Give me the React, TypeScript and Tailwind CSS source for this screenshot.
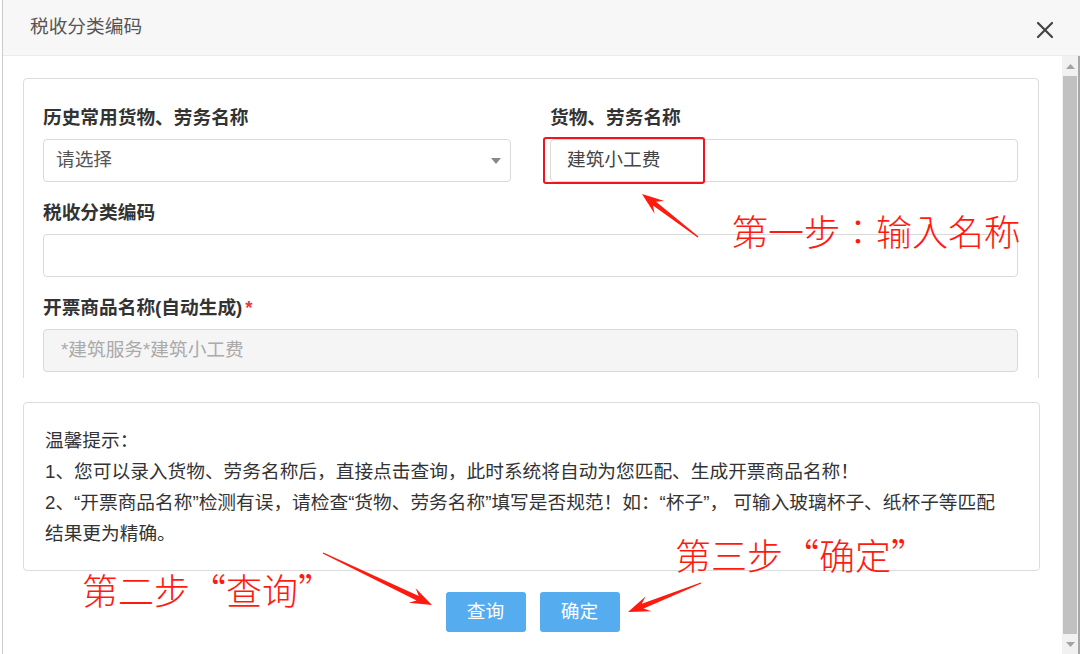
import React from "react";

const UI_FONT = "font-['Liberation_Sans','Noto_Sans_CJK_SC',sans-serif]";

type Pt = [number, number];

// tapered annotation arrow, thin at the tail and notched at the head
function arrowPoints(tail: Pt, tip: Pt, headLen = 22, headW = 16, shaftW = 5) {
  const dx = tip[0] - tail[0];
  const dy = tip[1] - tail[1];
  const len = Math.hypot(dx, dy);
  const ux = dx / len;
  const uy = dy / len;
  const nx = -uy;
  const ny = ux;
  const bx = tip[0] - ux * headLen * 0.72;
  const by = tip[1] - uy * headLen * 0.72;
  const hx = tip[0] - ux * headLen;
  const hy = tip[1] - uy * headLen;
  const pts: Pt[] = [
    [tail[0] + nx * 0.6, tail[1] + ny * 0.6],
    [bx + (nx * shaftW) / 2, by + (ny * shaftW) / 2],
    [hx + (nx * headW) / 2, hy + (ny * headW) / 2],
    tip,
    [hx - (nx * headW) / 2, hy - (ny * headW) / 2],
    [bx - (nx * shaftW) / 2, by - (ny * shaftW) / 2],
    [tail[0] - nx * 0.6, tail[1] - ny * 0.6],
  ];
  return pts.map((p) => `${p[0].toFixed(1)},${p[1].toFixed(1)}`).join(" ");
}

function Field({ label, required, children }: { label: string; required?: boolean; children: React.ReactNode }) {
  return (
    <div>
      <div className="h-[22px] leading-[22px] text-[18.7px] font-bold text-[#333] mb-[10px] whitespace-nowrap">
        {label}
        {required && <span className="text-[#e4393c] ml-[3px]">*</span>}
      </div>
      {children}
    </div>
  );
}

export default function App() {
  return (
    <div className={`relative w-[1080px] h-[654px] bg-white overflow-hidden ${UI_FONT}`}>
      <div className="flex h-full">
        <div className="w-[2px] bg-white" />
        <div className="w-px bg-[#cacaca]" />

        <div className="flex-1 flex flex-col min-w-0">
          {/* Header */}
          <div className="h-[56px] shrink-0 bg-[#f7f7f7] border-b border-[#ebebeb] flex items-center justify-between pl-[27px] pr-[26px]">
            <span className="text-[18.7px] text-[#555]">税收分类编码</span>
            <svg width="18" height="18" viewBox="0 0 18 18" className="mt-[4px]">
              <path d="M2 2 L16 16 M16 2 L2 16" stroke="#444" strokeWidth="2.2" strokeLinecap="round" />
            </svg>
          </div>

          <div className="flex flex-1 min-h-0">
            <div className="flex-1 flex flex-col min-w-0">
              {/* Scrolling form area */}
              <div className="h-[322px] overflow-hidden pt-[22px] pl-[20px] pr-[23px]">
                <div className="border border-[#dcdcdc] rounded-[4px] pt-[28px] pl-[19px] pr-[20px] pb-[30px] flex flex-col gap-[20px]">
                  <div className="grid grid-cols-2 gap-[39px]">
                    <Field label="历史常用货物、劳务名称">
                      <div className="h-[43px] border border-[#d9d9d9] rounded-[4px] flex items-center justify-between pl-[12px] pr-[9px]">
                        <span className="text-[18.7px] text-[#555]">请选择</span>
                        <svg width="10" height="6" viewBox="0 0 10 6">
                          <path d="M0 0 H10 L5 6 Z" fill="#888" />
                        </svg>
                      </div>
                    </Field>
                    <Field label="货物、劳务名称">
                      <div className="relative h-[43px] border border-[#d9d9d9] rounded-[4px] flex items-center pl-[16px]">
                        <span className="text-[18.7px] text-[#444]">建筑小工费</span>
                        <div className="absolute left-[-8px] top-[-3px] w-[162px] h-[47px] border-[2.5px] border-[#f0141e] rounded-[3px]" />
                      </div>
                    </Field>
                  </div>
                  <Field label="税收分类编码">
                    <div className="h-[43px] border border-[#d9d9d9] rounded-[4px]" />
                  </Field>
                  <Field label="开票商品名称(自动生成)" required>
                    <div className="h-[43px] border border-[#d9d9d9] rounded-[4px] bg-[#f5f5f5] flex items-center pl-[17px]">
                      <span className="text-[18.7px] text-[#aaa]">*建筑服务*建筑小工费</span>
                    </div>
                  </Field>
                </div>
              </div>

              {/* Tips */}
              <div className="mt-[24px] ml-[20px] mr-[22px] h-[169px] border border-[#dcdcdc] rounded-[4px] pt-[22px] pl-[21px] pr-[16px] text-[18.7px] leading-[31px] text-[#333]">
                <div>温馨提示：</div>
                <div className="whitespace-nowrap">1、您可以录入货物、劳务名称后，直接点击查询，此时系统将自动为您匹配、生成开票商品名称！</div>
                <div className="whitespace-nowrap">2、“开票商品名称”检测有误，请检查“货物、劳务名称”填写是否规范！如：“杯子”， 可输入玻璃杯子、纸杯子等匹配</div>
                <div>结果更为精确。</div>
              </div>

              {/* Buttons */}
              <div className="mt-[21px] flex justify-center gap-[14px]">
                <button className="w-[80px] h-[40px] rounded-[3px] bg-[#55acef] text-white text-[18.7px]">查询</button>
                <button className="w-[80px] h-[40px] rounded-[3px] bg-[#55acef] text-white text-[18.7px]">确定</button>
              </div>
            </div>

            {/* Scrollbar */}
            <div className="w-[18px] shrink-0 bg-[#f1f1f1] flex flex-col items-center border-r-[2px] border-[#a8a8a8]">
              <div className="h-[20px] flex items-center justify-center">
                <svg width="9" height="5" viewBox="0 0 9 5">
                  <path d="M0 5 H9 L4.5 0 Z" fill="#a3a3a3" />
                </svg>
              </div>
              <div className="w-[14px] flex-1 bg-[#c1c1c1]" />
              <div className="h-[20px] flex items-center justify-center">
                <svg width="9" height="5" viewBox="0 0 9 5">
                  <path d="M0 0 H9 L4.5 5 Z" fill="#a3a3a3" />
                </svg>
              </div>
            </div>
          </div>
        </div>
      </div>

      {/* Red annotations */}
      <svg className="absolute inset-0 pointer-events-none" width="1080" height="654">
        <polygon points={arrowPoints([698, 237], [642, 194])} fill="#ff1a0f" />
        <polygon points={arrowPoints([323, 553], [432, 605])} fill="#ff1a0f" />
        <polygon points={arrowPoints([701, 583], [628, 612])} fill="#ff1a0f" />
      </svg>
      <div className="absolute left-[732px] top-[210px] text-[36px] leading-[40px] text-[#ff1a0f] font-light whitespace-nowrap font-['Noto_Sans_CJK_JP',sans-serif]">
        第一步：输入名称
      </div>
      <div className="absolute left-[82px] top-[569px] text-[36px] leading-[40px] text-[#ff1a0f] font-light whitespace-nowrap font-['Noto_Sans_CJK_SC',sans-serif]">
        第二步“查询”
      </div>
      <div className="absolute left-[675px] top-[534px] text-[36px] leading-[40px] text-[#ff1a0f] font-light whitespace-nowrap font-['Noto_Sans_CJK_SC',sans-serif]">
        第三步“确定”
      </div>
    </div>
  );
}
